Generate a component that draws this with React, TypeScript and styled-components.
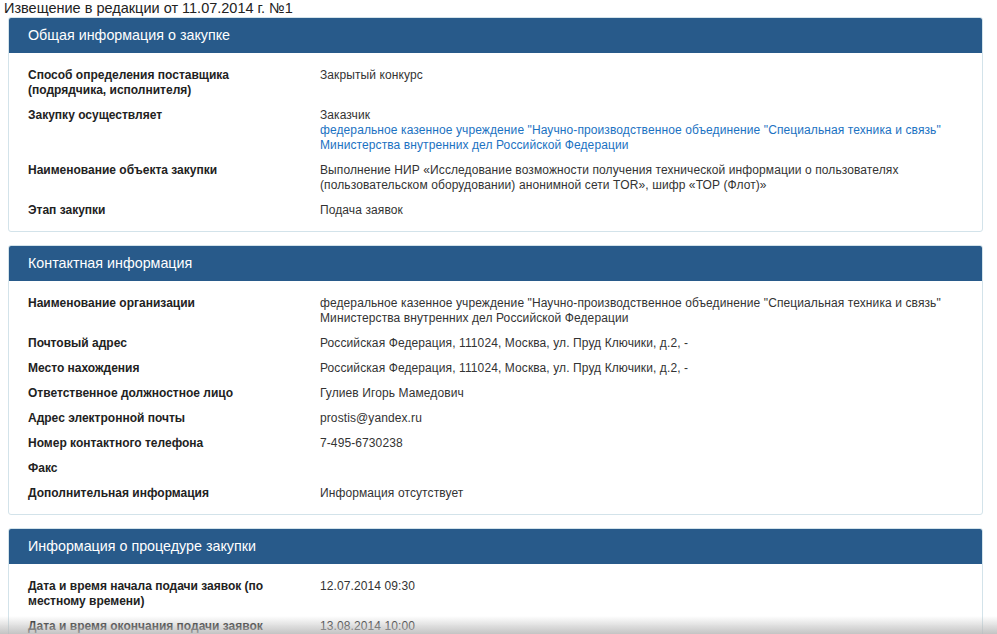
import React from 'react';
import styled, { createGlobalStyle } from 'styled-components';

const GlobalStyle = createGlobalStyle`
  html, body {
    margin: 0;
    padding: 0;
    background: #ffffff;
  }
  body {
    font-family: "Liberation Sans", Arial, sans-serif;
    color: #333333;
  }
`;

const Page = styled.div`
  padding: 0 14px 40px 8px;
  width: 975px;
`;

const NoticeTitle = styled.div`
  font-size: 14.5px;
  line-height: 17px;
  color: #222222;
  margin-left: -4px;
`;

const Panel = styled.section`
  border: 1px solid #d3e3ea;
  border-radius: 3px;
  margin-bottom: 13px;
  overflow: hidden;
`;

const PanelHeader = styled.h2`
  margin: 0;
  background: #285a8a;
  color: #ffffff;
  font-weight: normal;
  font-size: 14.3px;
  height: 35px;
  line-height: 34px;
  padding: 0 19px;
`;

const PanelBody = styled.div`
  display: flex;
  flex-direction: column;
  gap: 10px;
  padding: 15px 19px 13px 19px;
`;

const Row = styled.div`
  display: grid;
  grid-template-columns: 250px 1fr;
  column-gap: 42px;
  font-size: 12px;
  line-height: 15px;
`;

const Label = styled.div`
  font-weight: bold;
  color: #222222;
  min-height: 15px;
`;

const Value = styled.div`
  color: #333333;
  min-height: 15px;
  letter-spacing: 0.1px;
`;

const Link = styled.a`
  color: #1b72c2;
  text-decoration: none;
  display: block;
`;

const BottomFade = styled.div`
  position: fixed;
  left: 0;
  right: 0;
  bottom: 0;
  height: 18px;
  pointer-events: none;
  background: linear-gradient(to bottom, rgba(200, 200, 200, 0), rgba(185, 185, 185, 0.85));
`;

type Item = { label: string; value?: React.ReactNode };

const general: Item[] = [
  { label: 'Способ определения поставщика (подрядчика, исполнителя)', value: 'Закрытый конкурс' },
  {
    label: 'Закупку осуществляет',
    value: (
      <>
        Заказчик
        <Link href="#">
          федеральное казенное учреждение "Научно-производственное объединение "Специальная техника и связь" Министерства внутренних дел Российской Федерации
        </Link>
      </>
    ),
  },
  {
    label: 'Наименование объекта закупки',
    value:
      'Выполнение НИР «Исследование возможности получения технической информации о пользователях (пользовательском оборудовании) анонимной сети TOR», шифр «ТОР (Флот)»',
  },
  { label: 'Этап закупки', value: 'Подача заявок' },
];

const contacts: Item[] = [
  {
    label: 'Наименование организации',
    value:
      'федеральное казенное учреждение "Научно-производственное объединение "Специальная техника и связь" Министерства внутренних дел Российской Федерации',
  },
  { label: 'Почтовый адрес', value: 'Российская Федерация, 111024, Москва, ул. Пруд Ключики, д.2, -' },
  { label: 'Место нахождения', value: 'Российская Федерация, 111024, Москва, ул. Пруд Ключики, д.2, -' },
  { label: 'Ответственное должностное лицо', value: 'Гулиев Игорь Мамедович' },
  { label: 'Адрес электронной почты', value: 'prostis@yandex.ru' },
  { label: 'Номер контактного телефона', value: '7-495-6730238' },
  { label: 'Факс', value: '' },
  { label: 'Дополнительная информация', value: 'Информация отсутствует' },
];

const procedure: Item[] = [
  { label: 'Дата и время начала подачи заявок (по местному времени)', value: '12.07.2014 09:30' },
  { label: 'Дата и время окончания подачи заявок (по местному времени)', value: '13.08.2014 10:00' },
  { label: 'Место подачи заявок', value: 'Российская Федерация, 111024, Москва, ул. Пруд Ключики, д.2' },
];

const InfoPanel: React.FC<{ title: string; items: Item[] }> = ({ title, items }) => (
  <Panel>
    <PanelHeader>{title}</PanelHeader>
    <PanelBody>
      {items.map((item) => (
        <Row key={item.label}>
          <Label>{item.label}</Label>
          <Value>{item.value}</Value>
        </Row>
      ))}
    </PanelBody>
  </Panel>
);

const App: React.FC = () => (
  <>
    <GlobalStyle />
    <Page>
      <NoticeTitle>Извещение в редакции от 11.07.2014 г. №1</NoticeTitle>
      <InfoPanel title="Общая информация о закупке" items={general} />
      <InfoPanel title="Контактная информация" items={contacts} />
      <InfoPanel title="Информация о процедуре закупки" items={procedure} />
    </Page>
    <BottomFade />
  </>
);

export default App;
